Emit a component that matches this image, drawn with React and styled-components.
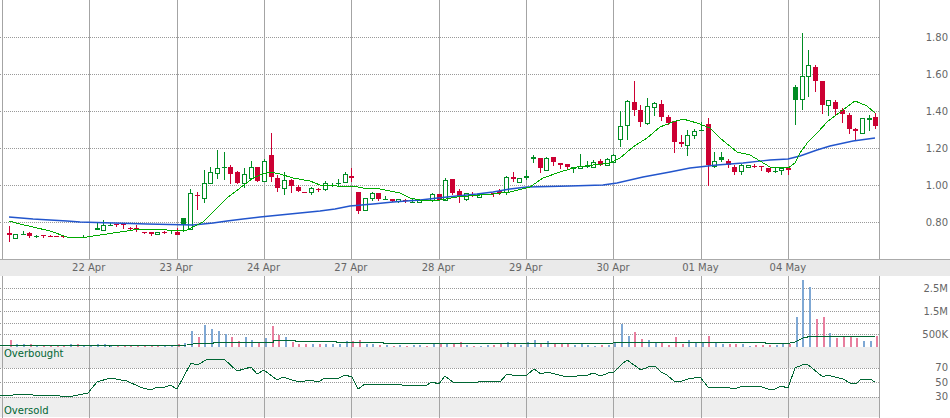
import React from "react";
import styled, { createGlobalStyle } from "styled-components";

const GlobalStyle = createGlobalStyle`
  html, body {
    margin: 0;
    padding: 0;
    background: #fff;
    overflow: hidden;
  }
`;

const Page = styled.div`
  width: 950px;
  height: 418px;
  display: flex;
  flex-direction: column;
  font-family: "DejaVu Sans", Verdana, sans-serif;
  font-size: 10px;
  color: #666;
  background: #fff;
`;

const Row = styled.div`
  display: flex;
  flex: none;
  height: ${(props) => props.$height}px;
  position: relative;
`;

const Plot = styled.svg`
  display: block;
  flex: none;
  width: 880px;
  height: ${(props) => props.$height}px;
`;

const Axis = styled.div`
  flex: 1;
  display: flex;
  flex-direction: column;
  align-items: flex-end;
  padding: ${(props) => props.$top}px 2px 0 0;
`;

const AxisLabel = styled.div`
  height: ${(props) => props.$step}px;
  line-height: ${(props) => props.$step}px;
  white-space: nowrap;
`;

const DateBand = styled.div`
  flex: none;
  display: flex;
  height: 16px;
  padding-left: 45px;
  background: #eaeaea;
  border-top: 1px solid #aaa;
`;

const DateLabel = styled.div`
  flex: none;
  width: 87.4px;
  text-align: center;
  line-height: 16px;
  white-space: nowrap;
`;

const ZoneLabel = styled.div`
  position: absolute;
  left: 4px;
  top: ${(props) => props.$top}px;
  line-height: 14px;
  color: #006633;
`;

const GRID_X = [2.5, 89.5, 177.5, 264.5, 351.5, 439.5, 526.5, 613.5, 701.5, 788.5, 879.5];
const DATES = ["22 Apr", "23 Apr", "24 Apr", "27 Apr", "28 Apr", "29 Apr", "30 Apr", "01 May", "04 May"];

const RED = "#cc0033";
const GREEN = "#008c23";

// x, kind (r red, f filled green, h hollow green), wick top, body top, body bottom, wick bottom
const CANDLES = [
  [9,"r",226,233,235,242],[15,"h",234,234,238,239],[23,"f",231,234,235,235],[29,"r",232,233,236,238],
  [36,"f",235,236,237,238],[43,"r",235,235,236,238],[50,"r",235,236,237,237],[56,"r",236,236,237,237],
  [63,"r",236,236,237,238],[70,"f",237,237,238,238],[77,"r",237,237,238,238],[83,"f",235,237,238,238],
  [97,"f",223,228,230,230],[103,"h",220,225,230,230],[110,"f",223,225,226,226],[116,"r",224,224,225,227],
  [123,"r",224,224,225,229],[130,"r",227,228,229,230],[136,"r",225,228,230,232],[144,"r",232,232,233,234],
  [151,"r",232,232,234,236],[157,"h",232,232,234,234],[164,"r",231,232,233,234],[171,"f",230,230,231,234],
  [177,"r",228,232,235,235],[183,"f",218,218,225,232],[190,"h",189,193,229,230],[197,"r",192,195,196,210],
  [204,"h",170,183,198,203],[210,"h",167,172,183,183],[217,"h",150,168,173,179],[224,"f",152,167,168,180],
  [230,"r",165,167,174,184],[237,"r",171,172,183,184],[244,"h",168,174,183,188],[251,"h",161,167,178,179],
  [257,"r",167,167,181,182],[264,"h",159,161,181,182],[271,"r",133,155,177,182],[277,"r",175,178,188,192],
  [284,"h",172,180,188,195],[291,"r",179,180,186,193],[298,"r",185,187,191,192],[304,"r",192,192,193,193],
  [311,"h",187,188,192,195],[318,"r",188,189,190,192],[325,"h",181,183,189,191],[332,"f",183,185,186,187],
  [338,"f",179,183,184,187],[345,"h",172,174,182,183],[351,"r",168,176,178,182],[358,"r",192,192,211,214],
  [365,"h",198,198,210,210],[372,"h",192,193,198,201],[378,"r",193,193,199,201],[385,"f",196,199,200,200],
  [392,"r",199,199,201,202],[398,"h",199,199,201,203],[405,"r",199,200,201,203],[412,"f",198,202,203,203],
  [419,"h",199,200,202,203],[425,"r",200,200,201,201],[432,"h",193,194,200,202],[439,"r",194,194,200,201],
  [445,"h",178,180,200,201],[452,"r",179,179,193,195],[459,"r",189,191,197,203],[466,"h",193,193,199,201],
  [472,"r",192,194,195,197],[479,"h",194,194,197,197],[486,"f",194,194,195,195],[493,"r",193,193,194,197],
  [499,"r",189,191,193,195],[506,"h",176,177,192,195],[513,"r",172,177,179,182],[519,"h",178,178,182,182],
  [526,"f",170,176,178,180],[533,"f",155,157,159,163],[540,"r",158,158,168,173],[546,"h",157,158,170,170],
  [553,"r",157,157,162,166],[560,"r",163,163,165,169],[567,"r",164,164,167,169],[573,"f",167,167,169,173],
  [580,"h",154,166,168,169],[587,"f",161,165,167,168],[593,"h",160,162,167,168],[600,"r",159,161,165,166],
  [607,"h",158,159,165,166],[613,"h",154,155,162,163],[620,"h",111,126,139,147],[627,"h",100,101,125,140],
  [634,"r",81,102,110,116],[640,"r",105,110,122,127],[647,"h",98,106,123,125],[654,"h",102,103,107,116],
  [661,"r",100,104,117,121],[668,"r",115,117,123,125],[674,"r",121,121,142,153],[681,"r",135,142,144,147],
  [687,"h",130,135,145,156],[694,"h",129,131,135,139],[701,"f",122,130,131,131],[708,"r",118,124,165,186],
  [714,"h",152,161,166,168],[721,"f",152,157,160,162],[728,"r",159,161,165,168],[734,"r",165,167,172,175],
  [741,"h",164,165,171,175],[748,"h",165,165,167,167],[754,"r",164,166,167,168],[761,"r",166,166,167,171],
  [768,"r",168,168,172,173],[775,"f",168,171,172,173],[781,"h",168,168,170,175],[788,"r",168,168,170,175],
  [795,"f",85,87,100,125],[802,"h",33,76,99,110],[808,"h",50,65,76,97],[815,"r",65,67,81,92],
  [822,"r",81,81,105,114],[828,"h",100,100,105,116],[835,"r",100,102,109,116],[842,"r",108,110,114,123],
  [849,"r",113,115,129,134],[855,"r",128,129,131,140],[862,"h",118,118,133,133],[869,"f",115,118,120,131],
  [875,"r",113,117,126,129],
];

const MA_GREEN = "9,221 20,224 33,227 50,231 67,237 87,237 100,235 127,231 140,229 167,230 185,231 197,225 203,222 217,208 227,198 240,188 253,178 260,175 270,172 280,174 293,178 310,181 320,185 337,186 353,186 363,188 380,189 400,193 410,198 420,200 440,200 457,197 480,195 493,194 510,192 530,187 543,178 560,172 577,167 610,163 620,158 633,147 647,138 660,127 673,122 683,119 697,123 710,128 720,138 737,152 750,155 760,161 770,167 788,168 795,163 800,153 808,142 818,132 827,122 840,112 855,101 867,106 875,113";
const MA_BLUE = "9,217 33,219 67,221 80,222 147,224 193,225 213,223 227,221 243,219 260,217 280,215 300,213 320,211 335,209 350,206 373,204 393,202 420,200 447,197 477,194 493,192 510,189 527,187 570,186 603,185 617,183 643,177 670,172 690,168 717,165 743,163 770,160 788,159 800,156 817,150 830,146 853,141 875,138";
const VOL_MA = "0,345 110,345 110,346 187,345 200,343 213,343 213,342 273,342 273,340 295,340 295,341 336,341 336,342 383,342 383,343 613,343 624,342 765,342 765,343 790,343 795,342 803,338 812,336 875,336";
const RSI = "0,395 7,396 20,394 33,395 60,396 73,396 88,393 97,382 110,378 127,381 140,387 150,390 158,387 163,388 170,385 177,389 191,363 197,365 208,359 224,359 237,371 251,367 257,374 264,370 277,380 283,377 292,380 300,382 310,380 318,382 325,378 339,378 345,375 352,377 358,389 365,384 377,385 395,384 402,385 422,385 427,385 432,382 439,384 445,376 453,382 459,383 466,382 473,383 483,381 500,382 507,374 517,376 527,375 534,369 541,374 547,372 563,376 577,376 588,375 593,373 601,376 608,373 614,372 622,364 627,360 641,370 648,367 655,366 661,372 667,375 674,381 682,381 688,379 700,377 708,387 725,387 735,389 742,386 762,387 768,389 775,389 781,386 788,388 795,368 802,365 807,364 823,377 827,375 843,379 850,383 857,383 861,379 870,379 875,382";

// volume bars: positive blue, negative pink, one every 6.72px
const VOLUME = [
  -7,3,3,-3,2.5,-2.5,-2.5,-1,-1,3,-3,1,1.5,3,3,1.5,-1,-1,-1,-1,-1,-1,-1.5,1,1,-3,4,16,-10,22,18,16,13,-10,-6,10,7,-4,9,-21,-12,10,-5,-3,
  -3,3,-3,3,3,3,6,-6,-7,3,3,-2,2,-1,2,-1,2,2,-1,4,-4,4,-4,-5,2,-1,1,2,-2,-4,5,-4,2,5,7,-4,6,-4,-4,-4,2,4,2,1,-2,2,4,23,
  11,-15,-8,7,4,-4,-2,-10,-3,7,4,4,-11,4,3,-3,-3,3,1,-2,-2,-2,2,3,-3,30,67,60,-28,-30,14,-9,-10,-10,-9,6,6,-11,
];

function Grid({ lines, top, bottom }) {
  return (
    <g shapeRendering="crispEdges">
      {lines.map((y) => (
        <line key={y} x1="0" x2="879" y1={y + 0.5} y2={y + 0.5} stroke="#999" strokeDasharray="1 1" />
      ))}
      {GRID_X.map((x) => (
        <line key={x} x1={x} x2={x} y1={top} y2={bottom} stroke="#a4a4a4" />
      ))}
    </g>
  );
}

function Candle({ c }) {
  const [x, kind, wickTop, bodyTop, bodyBottom, wickBottom] = c;
  const colour = kind === "r" ? RED : GREEN;
  const height = Math.max(bodyBottom - bodyTop, 1);
  return (
    <g shapeRendering="crispEdges">
      <rect x={x} y={wickTop} width="1" height={wickBottom - wickTop} fill={colour} />
      {kind === "h" ? (
        <rect x={x - 1.5} y={bodyTop + 0.5} width="4" height={height} fill="#fff" stroke={colour} />
      ) : (
        <rect x={x - 2} y={bodyTop} width="5" height={height} fill={colour} />
      )}
    </g>
  );
}

function PriceChart() {
  return (
    <Plot $height={259} viewBox="0 0 880 259">
      <Grid lines={[37, 74, 111, 148, 185, 222]} top={0} bottom={259} />
      {CANDLES.map((c) => (
        <Candle key={c[0]} c={c} />
      ))}
      <polyline points={MA_BLUE} fill="none" stroke="#2255cc" strokeWidth="1.4" />
      <polyline points={MA_GREEN} fill="none" stroke="#00aa00" strokeWidth="1" shapeRendering="crispEdges" />
    </Plot>
  );
}

function VolumeChart() {
  return (
    <Plot $height={71} viewBox="0 276 880 71">
      <Grid lines={[288, 299, 311, 323, 334]} top={276} bottom={347} />
      {VOLUME.map((v, i) => (
        <rect
          key={i}
          x={Math.round(9.5 + i * 6.72)}
          y={347 - Math.abs(v)}
          width="2"
          height={Math.abs(v)}
          fill={v > 0 ? "#7fa8d4" : "#e87f9f"}
          shapeRendering="crispEdges"
        />
      ))}
      <polyline points={VOL_MA} fill="none" stroke="#006633" strokeWidth="1" shapeRendering="crispEdges" />
    </Plot>
  );
}

function RsiChart() {
  return (
    <Plot $height={71} viewBox="0 347 880 71">
      <rect x="0" y="347" width="879" height="21" fill="#eee" />
      <rect x="0" y="397" width="879" height="20" fill="#eee" />
      <Grid lines={[368, 382, 397]} top={347} bottom={418} />
      <polyline points={RSI} fill="none" stroke="#006633" strokeWidth="1" shapeRendering="crispEdges" />
    </Plot>
  );
}

export default function App() {
  return (
    <Page>
      <GlobalStyle />
      <Row $height={259}>
        <PriceChart />
        <Axis $top={19}>
          {["1.80", "1.60", "1.40", "1.20", "1.00", "0.80"].map((p) => (
            <AxisLabel key={p} $step={37}>{p}</AxisLabel>
          ))}
        </Axis>
      </Row>
      <DateBand>
        {DATES.map((d) => (
          <DateLabel key={d}>{d}</DateLabel>
        ))}
      </DateBand>
      <Row $height={71}>
        <VolumeChart />
        <Axis $top={1}>
          {["2.5M", "1.5M", "500K"].map((v) => (
            <AxisLabel key={v} $step={23}>{v}</AxisLabel>
          ))}
        </Axis>
      </Row>
      <Row $height={71}>
        <RsiChart />
        <ZoneLabel $top={0}>Overbought</ZoneLabel>
        <ZoneLabel $top={57}>Oversold</ZoneLabel>
        <Axis $top={14}>
          {["70", "50", "30"].map((r) => (
            <AxisLabel key={r} $step={14.5}>{r}</AxisLabel>
          ))}
        </Axis>
      </Row>
    </Page>
  );
}
